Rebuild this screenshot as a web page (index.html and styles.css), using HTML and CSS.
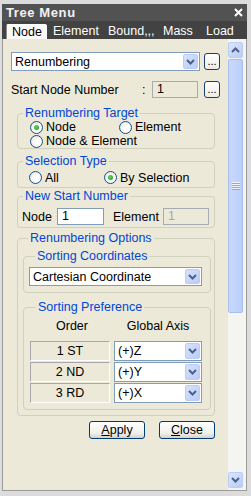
FILE: index.html
```html
<!DOCTYPE html>
<html lang="en">
<head>
    <meta charset="UTF-8">
    <title>Tree Menu</title>
    <link rel="stylesheet" href="styles.css">
</head>
<body>
    <div class="window">
        <div class="titlebar">
            <span class="title">Tree Menu</span>
            <svg class="close" width="9" height="9" viewBox="0 0 9 9"><path d="M1 1L8 8M8 1L1 8" stroke="#fff" stroke-width="2"/></svg>
        </div>
        <div class="tabs">
            <span class="tab tab-node active">Node</span>
            <span class="tab tab-element">Element</span>
            <span class="tab tab-bound">Bound,,,</span>
            <span class="tab tab-mass">Mass</span>
            <span class="tab">Load</span>
        </div>

        <div class="panel">
            <div class="content">
                <div class="row-top">
                    <div class="select select-main">
                        <span class="select-text">Renumbering</span>
                        <span class="arrow"><svg width="9" height="6" viewBox="0 0 9 6"><polyline points="1,1 4.5,4.5 8,1" fill="none" stroke="#4d6185" stroke-width="2"/></svg></span>
                    </div>
                    <button class="dots">...</button>
                </div>

                <div class="row-start">
                    <span class="start-label">Start Node Number</span>
                    <span class="colon">:</span>
                    <span class="input input-off start-input">1</span>
                    <button class="dots">...</button>
                </div>

                <fieldset class="group">
                    <legend>Renumbering Target</legend>
                    <div class="radios radios-target">
                        <span class="radio checked"><i></i>Node</span>
                        <span class="radio"><i></i>Element</span>
                        <span class="radio"><i></i>Node &amp; Element</span>
                    </div>
                </fieldset>

                <fieldset class="group group-sel">
                    <legend>Selection Type</legend>
                    <div class="radios radios-sel">
                        <span class="radio"><i></i>All</span>
                        <span class="radio checked"><i></i>By Selection</span>
                    </div>
                </fieldset>

                <fieldset class="group group-new">
                    <legend>New Start Number</legend>
                    <div class="new-row">
                        <span class="lbl-node">Node</span>
                        <span class="input new-input">1</span>
                        <span class="lbl-element">Element</span>
                        <span class="input input-off new-input off-text">1</span>
                    </div>
                </fieldset>

                <fieldset class="group group-opt">
                    <legend>Renumbering Options</legend>
                    <fieldset class="sub sub-coord">
                        <legend>Sorting Coordinates</legend>
                        <div class="select select-coord">
                            <span class="select-text">Cartesian Coordinate</span>
                            <span class="arrow"><svg width="9" height="6" viewBox="0 0 9 6"><polyline points="1,1 4.5,4.5 8,1" fill="none" stroke="#4d6185" stroke-width="2"/></svg></span>
                        </div>
                    </fieldset>
                    <fieldset class="sub sub-pref">
                        <legend>Sorting Preference</legend>
                        <div class="pref-head">
                            <span class="col-order">Order</span>
                            <span class="col-axis">Global Axis</span>
                        </div>
                        <div class="pref-row">
                            <span class="order">1 ST</span>
                            <div class="select select-axis">
                                <span class="select-text">(+)Z</span>
                                <span class="arrow"><svg width="9" height="6" viewBox="0 0 9 6"><polyline points="1,1 4.5,4.5 8,1" fill="none" stroke="#4d6185" stroke-width="2"/></svg></span>
                            </div>
                        </div>
                        <div class="pref-row">
                            <span class="order">2 ND</span>
                            <div class="select select-axis">
                                <span class="select-text">(+)Y</span>
                                <span class="arrow"><svg width="9" height="6" viewBox="0 0 9 6"><polyline points="1,1 4.5,4.5 8,1" fill="none" stroke="#4d6185" stroke-width="2"/></svg></span>
                            </div>
                        </div>
                        <div class="pref-row">
                            <span class="order">3 RD</span>
                            <div class="select select-axis">
                                <span class="select-text">(+)X</span>
                                <span class="arrow"><svg width="9" height="6" viewBox="0 0 9 6"><polyline points="1,1 4.5,4.5 8,1" fill="none" stroke="#4d6185" stroke-width="2"/></svg></span>
                            </div>
                        </div>
                    </fieldset>
                </fieldset>

                <div class="actions">
                    <button class="btn"><u>A</u>pply</button>
                    <button class="btn"><u>C</u>lose</button>
                </div>
            </div>

            <div class="scrollbar">
                <span class="sb-btn"><svg width="9" height="6" viewBox="0 0 9 6"><polyline points="1,5 4.5,1.5 8,5" fill="none" stroke="#4d6185" stroke-width="2"/></svg></span>
                <span class="sb-thumb"><i class="grip"></i></span>
                <span class="sb-track"></span>
                <span class="sb-btn"><svg width="9" height="6" viewBox="0 0 9 6"><polyline points="1,1 4.5,4.5 8,1" fill="none" stroke="#4d6185" stroke-width="2"/></svg></span>
            </div>
        </div>
    </div>
</body>
</html>
```

FILE: styles.css
```css
* {
    box-sizing: border-box;
}
body {
    margin: 0;
    background-color: #dcdcdc;
    font-family: "Liberation Sans", Arial, sans-serif;
    font-size: 12.5px;
    color: #000;
}
.window {
    width: 251px;
    height: 496px;
    padding: 4px 4px 5px 2px;
    display: flex;
    flex-direction: column;
    background-color: #dcdcdc;
}

/* title + tabs */
.titlebar {
    height: 17px;
    flex: none;
    display: flex;
    align-items: center;
    justify-content: space-between;
    padding: 0 4px 0 4px;
    background-color: #525252;
    color: #f2f2f2;
}
.title {
    font-weight: bold;
    font-size: 13px;
    letter-spacing: 0.6px;
}
.tabs {
    height: 18px;
    flex: none;
    display: flex;
    align-items: flex-end;
    padding-left: 4px;
    background-color: #424242;
}
.tab {
    height: 15px;
    line-height: 15px;
    padding-left: 6px;
    color: #fff;
}
.tab-node { width: 41px; }
.tab-element { width: 55px; }
.tab-bound { width: 55px; }
.tab-mass { width: 43px; }
.tab.active {
    background-color: #fafafa;
    color: #000;
    border-top: 1px solid #fff;
    border-left: 1px solid #8a8a8a;
    border-radius: 2px 2px 0 0;
    line-height: 14px;
    padding-left: 5px;
}

/* panel */
.panel {
    flex: 1;
    display: flex;
    background-color: #ece9d8;
    border-left: 1px solid #9c9c9c;
    border-right: 1px solid #9c9c9c;
    border-bottom: 1px solid #9c9c9c;
}
.content {
    width: 225px;
    padding: 13px 0 0 8px;
}

.row-top {
    display: flex;
    align-items: center;
    height: 19px;
}
.row-start {
    display: flex;
    align-items: center;
    height: 17px;
    margin-top: 10px;
}
.start-label {
    width: 131px;
}
.colon {
    width: 10px;
}

.select {
    display: flex;
    align-items: center;
    background-color: #fff;
    border: 1px solid #7f9db9;
}
.select-text {
    flex: 1;
    padding-left: 3px;
    white-space: nowrap;
}
.arrow {
    width: 15px;
    align-self: stretch;
    margin: 1px;
    display: flex;
    align-items: center;
    justify-content: center;
    background: linear-gradient(135deg, #d6e2fd, #b9ccf8);
    border: 1px solid #bccdf5;
    border-radius: 2px;
}
.select-main {
    width: 189px;
    height: 19px;
}
.select-coord {
    width: 173px;
    height: 19px;
}
.select-axis {
    width: 88px;
    height: 20px;
}

.dots {
    width: 16px;
    height: 17px;
    margin-left: 4px;
    padding: 0 0 2px 0;
    border: 1px solid #1c3d6e;
    border-radius: 3px;
    background: linear-gradient(#ffffff, #ecebe6);
    font-family: inherit;
    font-size: 11px;
    line-height: 11px;
    display: flex;
    align-items: flex-end;
    justify-content: center;
}
.row-start .dots {
    margin-left: 6px;
}

.input {
    display: block;
    height: 17px;
    line-height: 15px;
    padding-left: 4px;
    background-color: #fff;
    border: 1px solid #7f9db9;
}
.input-off {
    background-color: #ece9d8;
    border-color: #a5acb2;
}
.start-input {
    width: 46px;
}
.off-text {
    color: #aca899;
}

/* group boxes */
fieldset {
    margin: 0;
    padding: 0;
    min-width: 0;
    border: 1px solid #d0d0bf;
    border-radius: 4px;
}
legend {
    margin-left: 5px;
    padding: 0 2px;
    line-height: 14px;
    color: #0046d5;
}
.group {
    width: 198px;
    margin: 8px 0 0 6px;
}
.group-sel {
    margin-top: 5px;
}
.group-new {
    margin-top: 1px;
}
.group-opt {
    margin-top: 3px;
    padding: 4px 0 5px 5px;
}

.radios {
    display: grid;
}
.radios-target {
    grid-template-columns: 89px 1fr;
    grid-auto-rows: 14px;
    padding-left: 12px;
}
.radios-sel {
    grid-template-columns: 75px 1fr;
    grid-auto-rows: 15px;
    padding: 2px 0 2px 11px;
}
.radio {
    display: flex;
    align-items: center;
    white-space: nowrap;
}
.radio i {
    flex: none;
    width: 13px;
    height: 13px;
    margin-right: 3px;
    border: 1px solid #1c5180;
    border-radius: 50%;
    background: radial-gradient(circle at 60% 60%, #ffffff 30%, #dcdcd7);
    display: flex;
    align-items: center;
    justify-content: center;
}
.radio.checked i::after {
    content: "";
    width: 5px;
    height: 5px;
    border-radius: 50%;
    background: radial-gradient(circle at 40% 40%, #5fd65f, #1e961e);
}

.new-row {
    display: flex;
    align-items: center;
    padding: 5px 0 2px 4px;
}
.lbl-node {
    width: 35px;
}
.lbl-element {
    width: 50px;
    margin-left: 9px;
}
.new-input {
    width: 47px;
}
.new-row .input-off {
    width: 46px;
}

.sub {
    width: 188px;
}
.sub legend {
    margin-left: 6px;
}
.sub-coord {
    padding: 4px 0 6px 5px;
}
.sub-pref {
    margin-top: 7px;
    padding: 0 0 5px 6px;
}
.pref-head {
    display: flex;
    height: 27px;
    padding-top: 5px;
}
.col-order {
    width: 84px;
    text-align: center;
}
.col-axis {
    width: 88px;
    text-align: center;
}
.pref-row {
    display: flex;
    gap: 4px;
    margin-bottom: 1px;
}
.order {
    width: 80px;
    height: 20px;
    line-height: 18px;
    text-align: center;
    border: 1px solid;
    border-color: #a7a6aa #ffffff #ffffff #a7a6aa;
}

.actions {
    display: flex;
    justify-content: flex-end;
    gap: 14px;
    width: 204px;
    margin-top: 5px;
}
.btn {
    width: 56px;
    height: 18px;
    padding: 0;
    font-family: inherit;
    font-size: 12.5px;
    line-height: 15px;
    border: 1px solid #003c74;
    border-radius: 3px;
    background: linear-gradient(#ffffff, #f0f0ea 70%, #d6d0c5);
    color: #000;
}

/* scrollbar */
.scrollbar {
    width: 18px;
    display: flex;
    flex-direction: column;
    padding: 3px 3px 2px 0;
    background-color: #f4f4f0;
}
.sb-btn {
    height: 16px;
    display: flex;
    align-items: center;
    justify-content: center;
    background: linear-gradient(135deg, #dce6fe, #b7cbf8);
    border: 1px solid #bccdf5;
    border-radius: 2px;
}
.sb-thumb {
    height: 254px;
    margin-top: 1px;
    display: flex;
    align-items: center;
    justify-content: center;
    background: linear-gradient(90deg, #c9d8fc, #bccff9);
    border: 1px solid #a9bff2;
    border-radius: 2px;
}
.grip {
    width: 8px;
    height: 8px;
    background: repeating-linear-gradient(#eef3ff 0 1px, #8fa8e0 1px 2px);
}
.sb-track {
    flex: 1;
}
```
